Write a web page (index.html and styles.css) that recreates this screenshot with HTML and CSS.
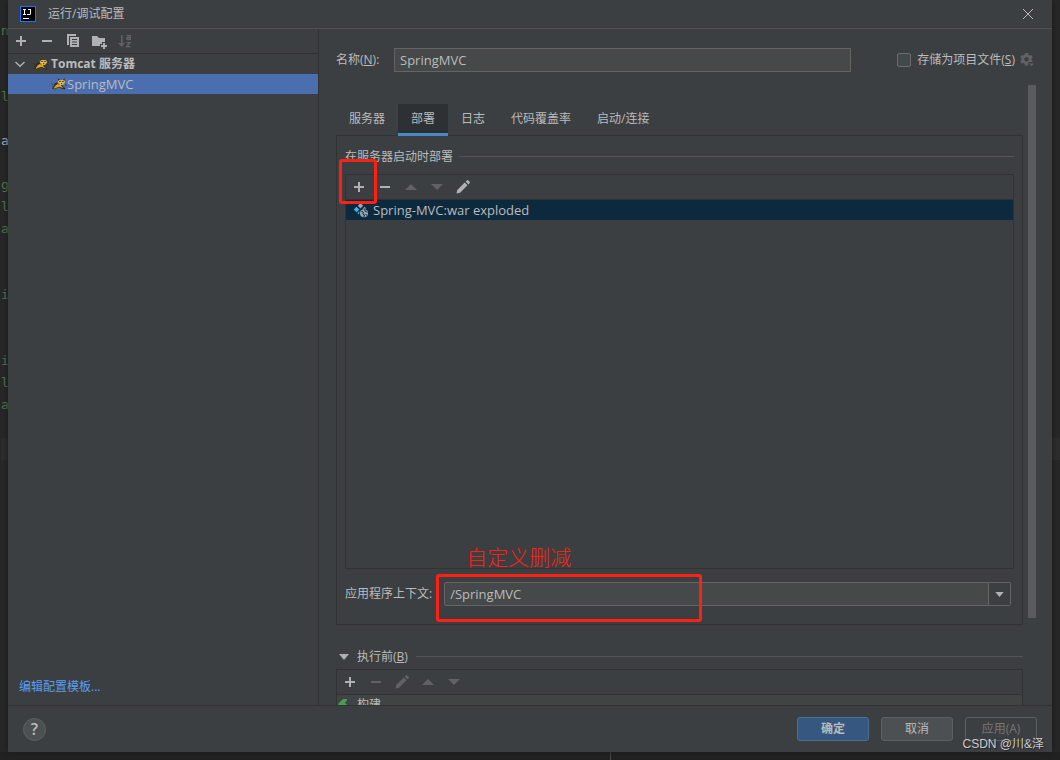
FILE: index.html
```html
<!DOCTYPE html>
<html lang="zh-CN">
<head>
<meta charset="utf-8">
<title>运行/调试配置</title>
<link rel="stylesheet" href="styles.css">
</head>
<body>
<svg class="defs" aria-hidden="true">
  <symbol id="plus" viewBox="0 0 16 16"><path d="M7 3h2v4h4v2H9v4H7V9H3V7h4z" fill="currentColor"/></symbol>
  <symbol id="minus" viewBox="0 0 16 16"><path d="M3 7h10v2H3z" fill="currentColor"/></symbol>
  <symbol id="up" viewBox="0 0 16 16"><path d="M2 11l6-6 6 6z" fill="currentColor"/></symbol>
  <symbol id="down" viewBox="0 0 16 16"><path d="M2 5h12l-6 6z" fill="currentColor"/></symbol>
  <symbol id="pencil" viewBox="0 0 16 16"><path d="M1.500 14.500l.8-3.600 7.400-7.400 2.800 2.800-7.400 7.400zM10.600 2.600l1.200-1.200q.8-.7 1.600 0l1.200 1.200q.7.8 0 1.600l-1.200 1.200z" fill="currentColor"/></symbol>
  <symbol id="cat" viewBox="0 0 16 16">
    <path d="M1 12.500l2-1.500.5-3.500L6 6.500 7.500 8l3.500 1 1.500 2 1.500 1v1.500l-3-.5-2-1.500-3 .5-2 1.500-2-.5z" fill="#2c2817"/>
    <path d="M4.500 9.500l2-1.500 3.500 1 1 2 2 1.200-2-.2L9 10.800 6 11.500 4 12.500l-1.500.3z" fill="#dca526"/>
    <path d="M6.800 3l2 1h2.700l2-1.300L14 6.500 12 9H9L7 7z" fill="#dfb04a"/>
    <path d="M6.500 2.500l2.300 1L7.300 5zm7.500-.3l-2 1.300 1.500 1.500zM8.300 5h1.400v1H8.300zm3 0h1.400v1h-1.400zM10 7.200h1.300v.8H10z" fill="#2c2817"/>
    <path d="M8.500 6.200h1.300v1zm2.900 0h1.300l-1.300 1z" fill="#f4ead0"/>
    <path d="M.5 7.500l2 1.500M1 11l2-.5M14 8.500l1.500 1" stroke="#2c2817" stroke-width=".7"/>
  </symbol>
</svg>

<div class="editor" aria-hidden="true">
  <div class="line">n</div><div class="line"></div><div class="line"></div>
  <div class="line">l</div><div class="line"></div>
  <div class="line plain">a</div><div class="line"></div>
  <div class="line">g</div><div class="line">l</div><div class="line">a</div>
  <div class="line"></div><div class="line"></div>
  <div class="line">i</div><div class="line"></div><div class="line"></div>
  <div class="line">i</div><div class="line">l</div><div class="line">a</div>
  <div class="line"></div><div class="line current"></div>
</div>
<div class="status" aria-hidden="true"></div>

<main class="dialog">
  <header class="titlebar">
    <svg class="logo" viewBox="0 0 16 16" aria-hidden="true"><path d="M0 0h16v16H0z" fill="#087cfa"/><path d="M1 1h14v14H1z" fill="#000"/><path d="M3 3h3v1H5v4h1v1H3V8h1V4H3zM8 3h3v5l-1 1H7V8h3V4H8zM3 12h6v1H3z" fill="#fff"/></svg>
    <h1>运行/调试配置</h1>
    <button class="icon-btn" aria-label="关闭"><svg viewBox="0 0 16 16"><path d="M3 3l10 10M13 3L3 13" stroke="#bbb" fill="none"/></svg></button>
  </header>

  <div class="body">
    <aside class="sidebar">
      <div class="toolbar">
        <button class="icon-btn" aria-label="添加"><svg><use href="#plus"/></svg></button>
        <button class="icon-btn" aria-label="移除"><svg><use href="#minus"/></svg></button>
        <button class="icon-btn" aria-label="复制"><svg viewBox="0 0 16 16"><path d="M2 1h9v2H4v9H2z" fill="currentColor"/><path fill-rule="evenodd" d="M5 4h9v10H5zm2 2v1h5V6zm0 2.500v1h5v-1zM7 11v1h5v-1z" fill="currentColor"/></svg></button>
        <button class="icon-btn" aria-label="新建文件夹"><svg viewBox="0 0 16 16"><path d="M1 3h5l2 2h6v4h-3v2H9v2H1zM12 10h2v2h2v2h-2v2h-2v-2h-2v-2h2z" fill="currentColor"/></svg></button>
        <button class="icon-btn" aria-label="排序" disabled><svg viewBox="0 0 16 16"><path d="M4 2h1.500v8H8l-3.300 4L1 10h3z" fill="currentColor"/><path d="M9.500 2.700h3.800V7M13 4.500h-2.300q-1 0-1 1t1 1H13M9.500 9.700h3.500l-3.500 4h4" fill="none" stroke="currentColor" stroke-width="1.300"/></svg></button>
      </div>
      <div class="tree" role="tree">
        <div class="node group" role="treeitem" aria-expanded="true">
          <svg class="chevron" viewBox="0 0 16 16"><path d="M3.500 6L8 10.300 12.500 6" stroke="#afb1b3" stroke-width="1.400" fill="none"/></svg>
          <svg class="cat"><use href="#cat"/></svg><span>Tomcat 服务器</span>
        </div>
        <div class="node selected" role="treeitem" aria-selected="true"><svg class="cat"><use href="#cat"/></svg><span>SpringMVC</span></div>
      </div>
      <a class="template" href="#">编辑配置模板...</a>
    </aside>

    <section class="content">
      <div class="name-row">
        <label for="name">名称(<u>N</u>):</label>
        <input id="name" class="field" type="text" value="SpringMVC">
        <div class="store">
          <input id="store" type="checkbox"><label for="store">存储为项目文件(<u>S</u>)</label>
          <button class="icon-btn" aria-label="存储选项" disabled><svg viewBox="0 0 16 16"><path fill-rule="evenodd" d="M6 1h3l.4 1.700 1.300.7 1.700-.5 1.400 2.300-1.300 1.300v1.400l1.300 1.300-.6.900H9.500L9 13.500H6l-.4-1.800-1.300-.7-1.700.5L1.200 9.200l1.300-1.300V6.500L1.200 5.200l1.400-2.300 1.700.5 1.300-.7zM7.500 5a2.200 2.200 0 1 0 0 4.400 2.200 2.200 0 0 0 0-4.400zM10 11.500h5L12.500 14z" fill="currentColor"/></svg></button>
        </div>
      </div>

      <div class="viewport">
        <div class="form">
          <div class="tabs" role="tablist">
            <button class="tab" role="tab">服务器</button>
            <button class="tab active" role="tab" aria-selected="true">部署</button>
            <button class="tab" role="tab">日志</button>
            <button class="tab" role="tab">代码覆盖率</button>
            <button class="tab" role="tab">启动/连接</button>
          </div>
          <div class="panel">
            <h2 class="section">在服务器启动时部署</h2>
            <div class="list deploy">
              <div class="toolbar">
                <span class="marked"><button class="icon-btn" aria-label="添加工件"><svg><use href="#plus"/></svg></button><i class="mark mark-add"></i></span>
                <button class="icon-btn" aria-label="移除工件"><svg><use href="#minus"/></svg></button>
                <button class="icon-btn" aria-label="上移" disabled><svg><use href="#up"/></svg></button>
                <button class="icon-btn" aria-label="下移" disabled><svg><use href="#down"/></svg></button>
                <button class="icon-btn" aria-label="编辑"><svg><use href="#pencil"/></svg></button>
              </div>
              <div class="artifact">
                <svg viewBox="0 0 16 16" aria-hidden="true"><path d="M7.500 1l2.700 2.700-2.700 2.700-2.700-2.700zM11.500 4.800l1.800 1.700-3 .3-.8.200z" fill="#9aa7b0"/><path d="M3.500 4.800l2.800 2.700-2.800 2.700L.8 7.500zM6.500 9l-.5 3.500L4.300 11z" fill="#40b6e0"/><circle cx="11" cy="11.300" r="4" fill="#9aa7b0"/><path d="M8.300 9.300l2.200 1-.7 1.700 1.700 1-.7 2M11.500 7.500l.7 1.700 2 1M12.500 12.500l1.500.7" fill="none" stroke="#0d293e"/></svg>
                <span>Spring-MVC:war exploded</span>
              </div>
            </div>
            <div class="context-row">
              <label for="context">应用程序上下文:</label>
              <div class="combo">
                <input id="context" class="field" type="text" value="/SpringMVC">
                <button aria-label="显示列表"><svg viewBox="0 0 10 6"><path d="M0 0h10L5 6z" fill="#afb1b3"/></svg></button>
                <i class="mark mark-context"></i>
                <span class="note">自定义删减</span>
              </div>
            </div>
          </div>
          <h2 class="section before"><svg viewBox="0 0 10 6" aria-hidden="true"><path d="M0 0h10L5 6z" fill="#afb1b3"/></svg><span>执行前(<u>B</u>)</span></h2>
          <div class="list tasks">
            <div class="toolbar">
              <button class="icon-btn" aria-label="添加任务"><svg><use href="#plus"/></svg></button>
              <button class="icon-btn" aria-label="移除任务" disabled><svg><use href="#minus"/></svg></button>
              <button class="icon-btn" aria-label="编辑任务" disabled><svg><use href="#pencil"/></svg></button>
              <button class="icon-btn" aria-label="上移任务" disabled><svg><use href="#up"/></svg></button>
              <button class="icon-btn" aria-label="下移任务" disabled><svg><use href="#down"/></svg></button>
            </div>
            <div class="task"><svg viewBox="0 0 16 16" aria-hidden="true"><path d="M1 7l5-5h4v1.500L8 5.500l1 1.500 6 6-2 2-6-6-1.500-1L3 9z" fill="#499c54"/></svg><span>构建</span></div>
          </div>
        </div>
        <div class="track"><div class="thumb"></div></div>
      </div>
    </section>
  </div>

  <footer class="footer">
    <button class="help" aria-label="帮助">?</button>
    <button class="btn primary">确定</button>
    <button class="btn">取消</button>
    <button class="btn" disabled>应用(A)</button>
  </footer>
</main>
<div class="watermark">CSDN @川&amp;泽</div>
</body>
</html>
```
FILE: styles.css
```css
* { box-sizing: border-box; }

body {
  margin: 0;
  height: 100vh;
  display: grid;
  grid-template: minmax(0, 1fr) 8px / minmax(0, 1fr);
  overflow: hidden;
  background: #272727;
  color: #bbb;
  font: 12px/16px "Open Sans", "Noto Sans CJK SC", sans-serif;
}

button, input { font: inherit; color: inherit; }
button { padding: 0; border: 0; background: none; }
svg { display: block; flex: none; }
h1, h2 { margin: 0; font-size: 12px; font-weight: 400; }
.defs { position: absolute; width: 0; height: 0; }

.editor {
  grid-area: 1 / 1;
  padding: 20px 0 0 1px;
  font: 13px/22px "DejaVu Sans Mono", monospace;
  color: #54794a;
}
.line { height: 22px; }
.plain { color: #a9b7c6; }
.current { background: #2d2d2d; }

.status { grid-area: 2 / 1; background: #222; }
.status::after {
  content: "";
  display: block;
  width: 610px;
  height: 8px;
  border-right: 1px solid #4a4a4a;
}

.dialog {
  grid-area: 1 / 1;
  z-index: 1;
  margin: 0 8px;
  display: flex;
  flex-direction: column;
  min-height: 0;
  background: #3c3f41;
  box-shadow: 0 0 6px #1b1b1b;
}

.titlebar {
  display: flex;
  align-items: center;
  height: 29px;
  padding: 0 16px 0 12px;
  border-bottom: 1px solid #515151;
}
.titlebar h1 { flex: 1; margin-left: 12px; }
.logo { width: 16px; height: 16px; }

.icon-btn { width: 16px; height: 16px; color: #afb1b3; }
.icon-btn svg { width: 16px; height: 16px; }
.icon-btn:disabled { color: #606263; }

.body { flex: 1; display: flex; min-height: 0; }

.sidebar {
  display: flex;
  flex-direction: column;
  width: 311px;
  flex: none;
  border-right: 1px solid #323232;
}
.toolbar {
  display: flex;
  align-items: center;
  gap: 10px;
  height: 25px;
  padding: 0 5px;
  border-bottom: 1px solid #323232;
}
.tree { flex: 1; }
.node { display: flex; align-items: center; height: 20px; padding-left: 43px; font-size: 13px; }
.group { padding-left: 4px; font-size: 12px; font-weight: 700; }
.group .cat { margin-left: 5px; }
.cat, .chevron { width: 16px; height: 16px; }
.group span { margin-left: 2px; }
.selected { background: #4b6eaf; }
.template { padding: 0 11px 10px; color: #589df6; text-decoration: none; }

.content { flex: 1; display: flex; flex-direction: column; min-width: 0; }
.name-row { display: flex; align-items: center; padding: 19px 17px 13px 17px; }
.name-row > label { width: 58px; }
.field {
  flex: 1;
  min-width: 0;
  height: 24px;
  padding: 0 5px;
  border: 1px solid #646464;
  background: #45494a;
  outline: 0;
  font-size: 13px;
}
.store { display: flex; align-items: center; margin-left: 46px; }
.store input {
  appearance: none;
  width: 14px;
  height: 14px;
  margin: 0 6px 0 0;
  border: 1px solid #6b6b6b;
  border-radius: 2px;
  background: #43494a;
}
.store .icon-btn { margin-left: 4px; }

.viewport { flex: 1; display: flex; min-height: 0; overflow: hidden; padding: 0 16px 0 17px; }
.form { flex: 1; min-width: 0; padding-top: 19px; }
.track { width: 8px; margin-left: 5px; }
.thumb { height: 86%; background: #595b5d; }

.tabs { display: flex; height: 31px; }
.tab { height: 32px; padding: 1px 13px 0; border-bottom: 3px solid transparent; }
.tab.active { position: relative; background: #2d3134; border-color: #4a88c7; }

.panel { padding: 12px 8px 18px; border: 1px solid #323232; }
.section { display: flex; align-items: center; gap: 6px; height: 17px; }
.section::after { content: ""; flex: 1; height: 1px; background: #555; }
.list { border: 1px solid #323232; }
.deploy { height: 395px; margin-top: 9px; }
.artifact { display: flex; align-items: center; gap: 4px; height: 20px; padding-left: 7px; background: #0d293e; font-size: 13px; }
.artifact svg, .task svg { width: 16px; height: 16px; }

.context-row { display: flex; align-items: center; gap: 12px; padding: 13px 3px 0 0; }
.combo { position: relative; flex: 1; display: flex; }
.combo .field { border-radius: 2px 0 0 2px; }
.combo button {
  display: grid;
  place-items: center;
  width: 22px;
  border: 1px solid #646464;
  border-left: 0;
  border-radius: 0 2px 2px 0;
}
.combo button svg { width: 9px; height: 5px; }

.before { margin-top: 23px; gap: 8px; padding-left: 3px; }
.before svg { width: 10px; height: 6px; }
.tasks { margin-top: 4px; }
.task { display: flex; align-items: center; gap: 4px; height: 20px; background: #414445; }

.marked { position: relative; display: flex; }
.mark { position: absolute; border: 3px solid #ff2014; border-radius: 3px; pointer-events: none; }
.mark-add { inset: -20px -10px -9px -12px; }
.mark-context { left: -8px; top: -8px; width: 266px; height: 48px; }
.note {
  position: absolute;
  left: 22px;
  top: -40px;
  font-size: 21px;
  font-weight: 300;
  line-height: 30px;
  color: #ff2014;
}

.footer {
  display: flex;
  align-items: center;
  gap: 12px;
  height: 47px;
  padding: 0 15px;
  border-top: 1px solid #323232;
}
.help {
  width: 23px;
  height: 23px;
  margin-right: auto;
  border: 1px solid #5e6060;
  border-radius: 50%;
  background: #4c5052;
  font-size: 16px;
  font-weight: 600;
}
.btn { width: 72px; height: 24px; border: 1px solid #5e6060; border-radius: 3px; background: #4c5052; }
.primary { border-color: #4c708c; background: #365880; font-weight: 700; }
.btn:disabled { background: none; color: #777; }

.watermark {
  position: absolute;
  right: 16px;
  bottom: 8px;
  z-index: 2;
  font-family: "Liberation Sans", "Noto Sans CJK SC", sans-serif;
  color: #ccc;
  text-shadow: 1px 1px 1px #222;
}
```
